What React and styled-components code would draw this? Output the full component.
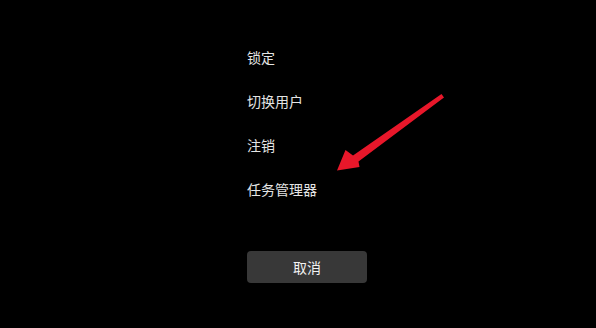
import React from "react";
import styled, { createGlobalStyle } from "styled-components";

const Global = createGlobalStyle`
  html, body { margin: 0; padding: 0; background: #000; }
  body { font-family: "Noto Sans CJK SC", "Noto Sans", sans-serif; }
`;

const Screen = styled.div`
  position: relative;
  width: 596px;
  height: 328px;
  background: #000;
  overflow: hidden;
  display: flex;
  flex-direction: column;
  padding: 47px 0 0 247px;
  box-sizing: border-box;
`;

const Menu = styled.div`
  display: flex;
  flex-direction: column;
  gap: 24px;
`;

const Item = styled.div`
  height: 20px;
  line-height: 20px;
  font-size: 14px;
  color: #e4e4e4;
  white-space: nowrap;
`;

const CancelButton = styled.button`
  margin-top: 52px;
  width: 120px;
  height: 32px;
  border: none;
  border-radius: 4px;
  background: #383838;
  color: #f2f2f2;
  font-family: inherit;
  font-size: 14px;
  padding: 0;
`;

const Arrow = styled.svg`
  position: absolute;
  left: 0;
  top: 0;
  pointer-events: none;
`;

export default function App() {
  return (
    <>
      <Global />
      <Screen>
        <Menu>
          <Item>锁定</Item>
          <Item>切换用户</Item>
          <Item>注销</Item>
          <Item>任务管理器</Item>
        </Menu>
        <div>
          <CancelButton>取消</CancelButton>
        </div>
        <Arrow width="596" height="328" viewBox="0 0 596 328">
          <polygon
            points="441.5,94 353,155.5 345.5,150 337,170.5 359.5,167 358.5,161.5 444,97.5"
            fill="#e8172a"
          />
        </Arrow>
      </Screen>
    </>
  );
}
